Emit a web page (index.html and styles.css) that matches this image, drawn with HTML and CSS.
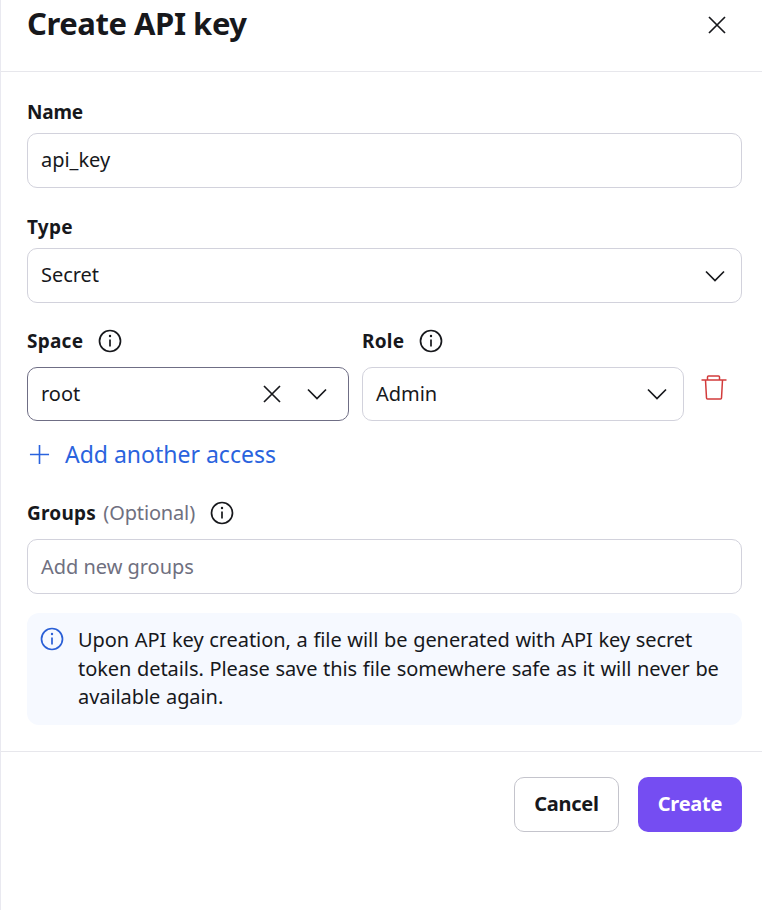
FILE: index.html
```html
<!DOCTYPE html>
<html lang="en">
<head>
<meta charset="utf-8">
<title>Create API key</title>
<link rel="stylesheet" href="styles.css">
</head>
<body>
<div class="dialog">
  <header class="head">
    <h1 class="title">Create API key</h1>
    <svg class="close" viewBox="0 0 18 18"><path d="M1 1l16 16M17 1L1 17"/></svg>
  </header>
  <main class="body">
    <div class="label name-label">Name</div>
    <div class="field"><span class="value">api_key</span></div>
    <div class="label type-label">Type</div>
    <div class="field"><span class="value">Secret</span>
      <svg class="chev" viewBox="0 0 20 12"><path d="M1 1.5l9 9 9-9"/></svg>
    </div>
    <div class="access">
      <div class="col col-space">
        <div class="label with-info">Space
          <svg class="info" viewBox="0 0 24 24"><circle cx="12" cy="12" r="10.5"/><path d="M12 10.5v7"/><circle class="dot" cx="12" cy="7" r="1.2"/></svg>
        </div>
        <div class="field active"><span class="value">root</span>
          <svg class="clear" viewBox="0 0 18 18"><path d="M1 1l16 16M17 1L1 17"/></svg>
          <svg class="chev" viewBox="0 0 20 12"><path d="M1 1.5l9 9 9-9"/></svg>
        </div>
      </div>
      <div class="col col-role">
        <div class="label with-info">Role
          <svg class="info" viewBox="0 0 24 24"><circle cx="12" cy="12" r="10.5"/><path d="M12 10.5v7"/><circle class="dot" cx="12" cy="7" r="1.2"/></svg>
        </div>
        <div class="field"><span class="value">Admin</span>
          <svg class="chev" viewBox="0 0 20 12"><path d="M1 1.5l9 9 9-9"/></svg>
        </div>
      </div>
      <svg class="trash" viewBox="0 0 26 26"><path d="M0.5 6h25M6.5 6V3a1 1 0 0 1 1-1h10a1 1 0 0 1 1 1v3M4.5 6l1 18a1 1 0 0 0 1 1h13a1 1 0 0 0 1-1l1-18"/></svg>
    </div>
    <div class="add">
      <svg class="plus" viewBox="0 0 22 22"><path d="M11 1v20M1 11h20"/></svg>
      <span>Add another access</span>
    </div>
    <div class="label with-info groups-label"><span>Groups <span class="opt">(Optional)</span></span>
      <svg class="info" viewBox="0 0 24 24"><circle cx="12" cy="12" r="10.5"/><path d="M12 10.5v7"/><circle class="dot" cx="12" cy="7" r="1.2"/></svg>
    </div>
    <div class="field"><span class="value placeholder">Add new groups</span></div>
    <div class="notice">
      <svg class="info blue" viewBox="0 0 24 24"><circle cx="12" cy="12" r="10.5"/><path d="M12 10.5v7"/><circle class="dot" cx="12" cy="7" r="1.2"/></svg>
      <p class="notice-text">Upon API key creation, a file will be generated with API key secret token details. Please save this file somewhere safe as it will never be available again.</p>
    </div>
  </main>
  <footer class="foot">
    <button class="btn cancel">Cancel</button>
    <button class="btn create">Create</button>
  </footer>
</div>
</body>
</html>
```
FILE: styles.css
```css
* { box-sizing: border-box; }
html, body { margin: 0; height: 100%; background: #fff; }
body { font-family: "Noto Sans", "Liberation Sans", sans-serif; color: #17181c; overflow: hidden; }
.dialog { height: 910px; border-left: 1px solid #e9e9f0; }
svg { fill: none; stroke: currentColor; flex: none; display: block; }
.head { height: 72px; border-bottom: 1px solid #e7e7ec; display: flex; justify-content: space-between; align-items: flex-start; padding: 0 36px 0 26px; }
.title { margin: 0; font-size: 31px; line-height: 47px; font-weight: 700; letter-spacing: -0.45px; }
.close { width: 18px; height: 18px; margin-top: 16px; stroke-width: 1.7; }
.body { padding: 27px 20px 0 26px; }
.label { font-size: 19px; line-height: 26px; font-weight: 700; letter-spacing: 0.25px; margin-bottom: 8px; }
.name-label { letter-spacing: -0.2px; }
.type-label { margin-top: 26px; }
.with-info { display: flex; align-items: center; gap: 15px; }
.info { width: 24px; height: 24px; stroke-width: 1.7; }
.info .dot { fill: currentColor; stroke: none; }
.field { height: 55px; border: 1px solid #d2d2dc; border-radius: 10px; display: flex; align-items: center; padding: 0 13px; }
.value { flex: 1; font-size: 20px; letter-spacing: -0.03px; padding-bottom: 2px; }
.placeholder { color: #6f7080; padding-bottom: 0; }
.chev { width: 20px; height: 12px; margin-right: 3px; stroke-width: 1.7; }
.access { display: flex; align-items: flex-start; gap: 13px; margin-top: 25px; }
.col-space { width: 322px; }
.col-role { width: 322px; }
.access .field { height: 54px; }
.access .label { margin-bottom: 13px; }
.active { border-color: #6f6e85; }
.active .chev { margin-right: 8px; }
.clear { width: 18px; height: 18px; margin-right: 26px; stroke-width: 1.7; }
.trash { width: 26px; height: 26px; margin: 46px 0 0 4px; color: #d23b3b; stroke-width: 1.5; }
.add { display: flex; align-items: center; gap: 15px; margin-top: 18px; color: #2a63de; font-size: 23px; line-height: 30px; letter-spacing: 0; padding-left: 2px; }
.plus { width: 21px; height: 21px; stroke-width: 1.7; }
.groups-label { margin-top: 31px; margin-bottom: 13px; }
.opt { font-weight: 400; color: #6f7080; font-size: 20px; letter-spacing: -0.15px; margin-left: 2px; }
.notice { margin-top: 19px; height: 112px; background: #f6f9ff; border-radius: 12px; display: flex; gap: 14px; padding: 13px; }
.notice .info { margin-top: 1px; }
.blue { color: #2a5fd6; }
.notice-text { margin: 0; font-size: 20px; line-height: 28.5px; letter-spacing: -0.07px; word-spacing: 0.6px; }
.foot { border-top: 1px solid #e7e7ec; margin-top: 26px; display: flex; justify-content: flex-end; gap: 19px; padding: 25px 20px 0 0; }
.btn { height: 55px; border-radius: 10px; font: 700 20px "Noto Sans", sans-serif; letter-spacing: -0.25px; padding-bottom: 3px; }
.cancel { width: 105px; background: #fff; border: 1px solid #c4c4cc; color: #17181c; }
.create { width: 104px; background: #754df2; border: none; color: #fff; }
```
